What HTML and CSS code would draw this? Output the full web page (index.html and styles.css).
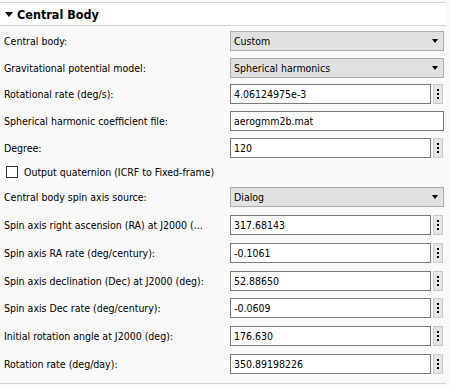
FILE: index.html
```html
<!DOCTYPE html>
<html>
<head>
<meta charset="utf-8">
<link rel="stylesheet" href="styles.css">
</head>
<body>
<div class="panel">
  <div class="header">
    <span class="tri"></span>
    <span class="title">Central Body</span>
  </div>
  <div class="content">
    <div class="group group-a">
      <div class="row">
        <span class="label">Central body:</span>
        <div class="select"><span class="value">Custom</span><span class="arrow"></span></div>
      </div>
      <div class="row">
        <span class="label">Gravitational potential model:</span>
        <div class="select"><span class="value">Spherical harmonics</span><span class="arrow"></span></div>
      </div>
      <div class="row">
        <span class="label">Rotational rate (deg/s):</span>
        <div class="field"><div class="input">4.06124975e-3</div><div class="dots"><i></i><i></i><i></i></div></div>
      </div>
      <div class="row">
        <span class="label">Spherical harmonic coefficient file:</span>
        <div class="input wide">aerogmm2b.mat</div>
      </div>
      <div class="row">
        <span class="label">Degree:</span>
        <div class="field"><div class="input">120</div><div class="dots"><i></i><i></i><i></i></div></div>
      </div>
    </div>
    <div class="check-row">
      <span class="checkbox"></span>
      <span class="check-label">Output quaternion (ICRF to Fixed-frame)</span>
    </div>
    <div class="group group-b">
      <div class="row">
        <span class="label">Central body spin axis source:</span>
        <div class="select"><span class="value">Dialog</span><span class="arrow"></span></div>
      </div>
      <div class="row">
        <span class="label">Spin axis right ascension (RA) at J2000 (...</span>
        <div class="field"><div class="input">317.68143</div><div class="dots"><i></i><i></i><i></i></div></div>
      </div>
      <div class="row">
        <span class="label">Spin axis RA rate (deg/century):</span>
        <div class="field"><div class="input">-0.1061</div><div class="dots"><i></i><i></i><i></i></div></div>
      </div>
      <div class="row">
        <span class="label">Spin axis declination (Dec) at J2000 (deg):</span>
        <div class="field"><div class="input">52.88650</div><div class="dots"><i></i><i></i><i></i></div></div>
      </div>
      <div class="row">
        <span class="label">Spin axis Dec rate (deg/century):</span>
        <div class="field"><div class="input">-0.0609</div><div class="dots"><i></i><i></i><i></i></div></div>
      </div>
      <div class="row">
        <span class="label">Initial rotation angle at J2000 (deg):</span>
        <div class="field"><div class="input">176.630</div><div class="dots"><i></i><i></i><i></i></div></div>
      </div>
      <div class="row">
        <span class="label">Rotation rate (deg/day):</span>
        <div class="field"><div class="input">350.89198226</div><div class="dots"><i></i><i></i><i></i></div></div>
      </div>
    </div>
  </div>
</div>
</body>
</html>
```
FILE: styles.css
```css
html, body {
  margin: 0;
  padding: 0;
  background: #f9f9f9;
}
body {
  font-family: "DejaVu Sans Condensed", "Liberation Sans", sans-serif;
  font-size: 10.5px;
  color: #000;
}
.panel {
  width: 446px;
  margin-top: 2px;
  border-top: 1px solid #d6d6d6;
  border-bottom: 1px solid #d6d6d6;
}
.header {
  height: 22px;
  background: #fff;
  border-bottom: 1px solid #d6d6d6;
  display: flex;
  align-items: center;
}
.tri {
  width: 0;
  height: 0;
  margin-left: 5px;
  margin-right: 4px;
  border-left: 4.5px solid transparent;
  border-right: 4.5px solid transparent;
  border-top: 5px solid #000;
}
.title {
  font-weight: bold;
  font-size: 12.5px;
  color: #000;
}
.content {
  padding: 5px 2px 8.87px 0;
}
.group {
  display: flex;
  flex-direction: column;
}
.group-a { gap: 6.67px; }
.group-b { gap: 7.8px; margin-top: 5px; }
.row {
  display: grid;
  grid-template-columns: 230px 214px;
  height: 20px;
  align-items: center;
}
.label {
  padding-left: 4px;
  white-space: nowrap;
  overflow: hidden;
}
.select {
  box-sizing: border-box;
  height: 20px;
  background: #e1e1e1;
  border: 1px solid #adadad;
  display: flex;
  align-items: center;
  justify-content: space-between;
  padding: 0 5px 0 3px;
}
.arrow {
  width: 0;
  height: 0;
  border-left: 3.5px solid transparent;
  border-right: 3.5px solid transparent;
  border-top: 4px solid #000;
}
.field {
  display: flex;
  align-items: center;
  gap: 2px;
}
.input {
  box-sizing: border-box;
  height: 20px;
  width: 201px;
  background: #fff;
  border: 1px solid #7a7a7a;
  padding: 0 3px;
  display: flex;
  align-items: center;
  white-space: nowrap;
}
.input.wide {
  width: 214px;
}
.dots {
  box-sizing: border-box;
  width: 10px;
  height: 20px;
  background: #e5e5e5;
  border: 1px solid #cacaca;
  display: flex;
  flex-direction: column;
  align-items: center;
  justify-content: center;
  gap: 2px;
}
.dots i {
  display: block;
  width: 2px;
  height: 2px;
  background: #000;
}
.check-row {
  margin-top: 4.67px;
  height: 20px;
  display: flex;
  align-items: center;
}
.checkbox {
  box-sizing: border-box;
  width: 12px;
  height: 12px;
  margin-left: 6px;
  margin-right: 6px;
  border: 1px solid #333;
  background: #fff;
}
.check-label {
  white-space: nowrap;
}
```
